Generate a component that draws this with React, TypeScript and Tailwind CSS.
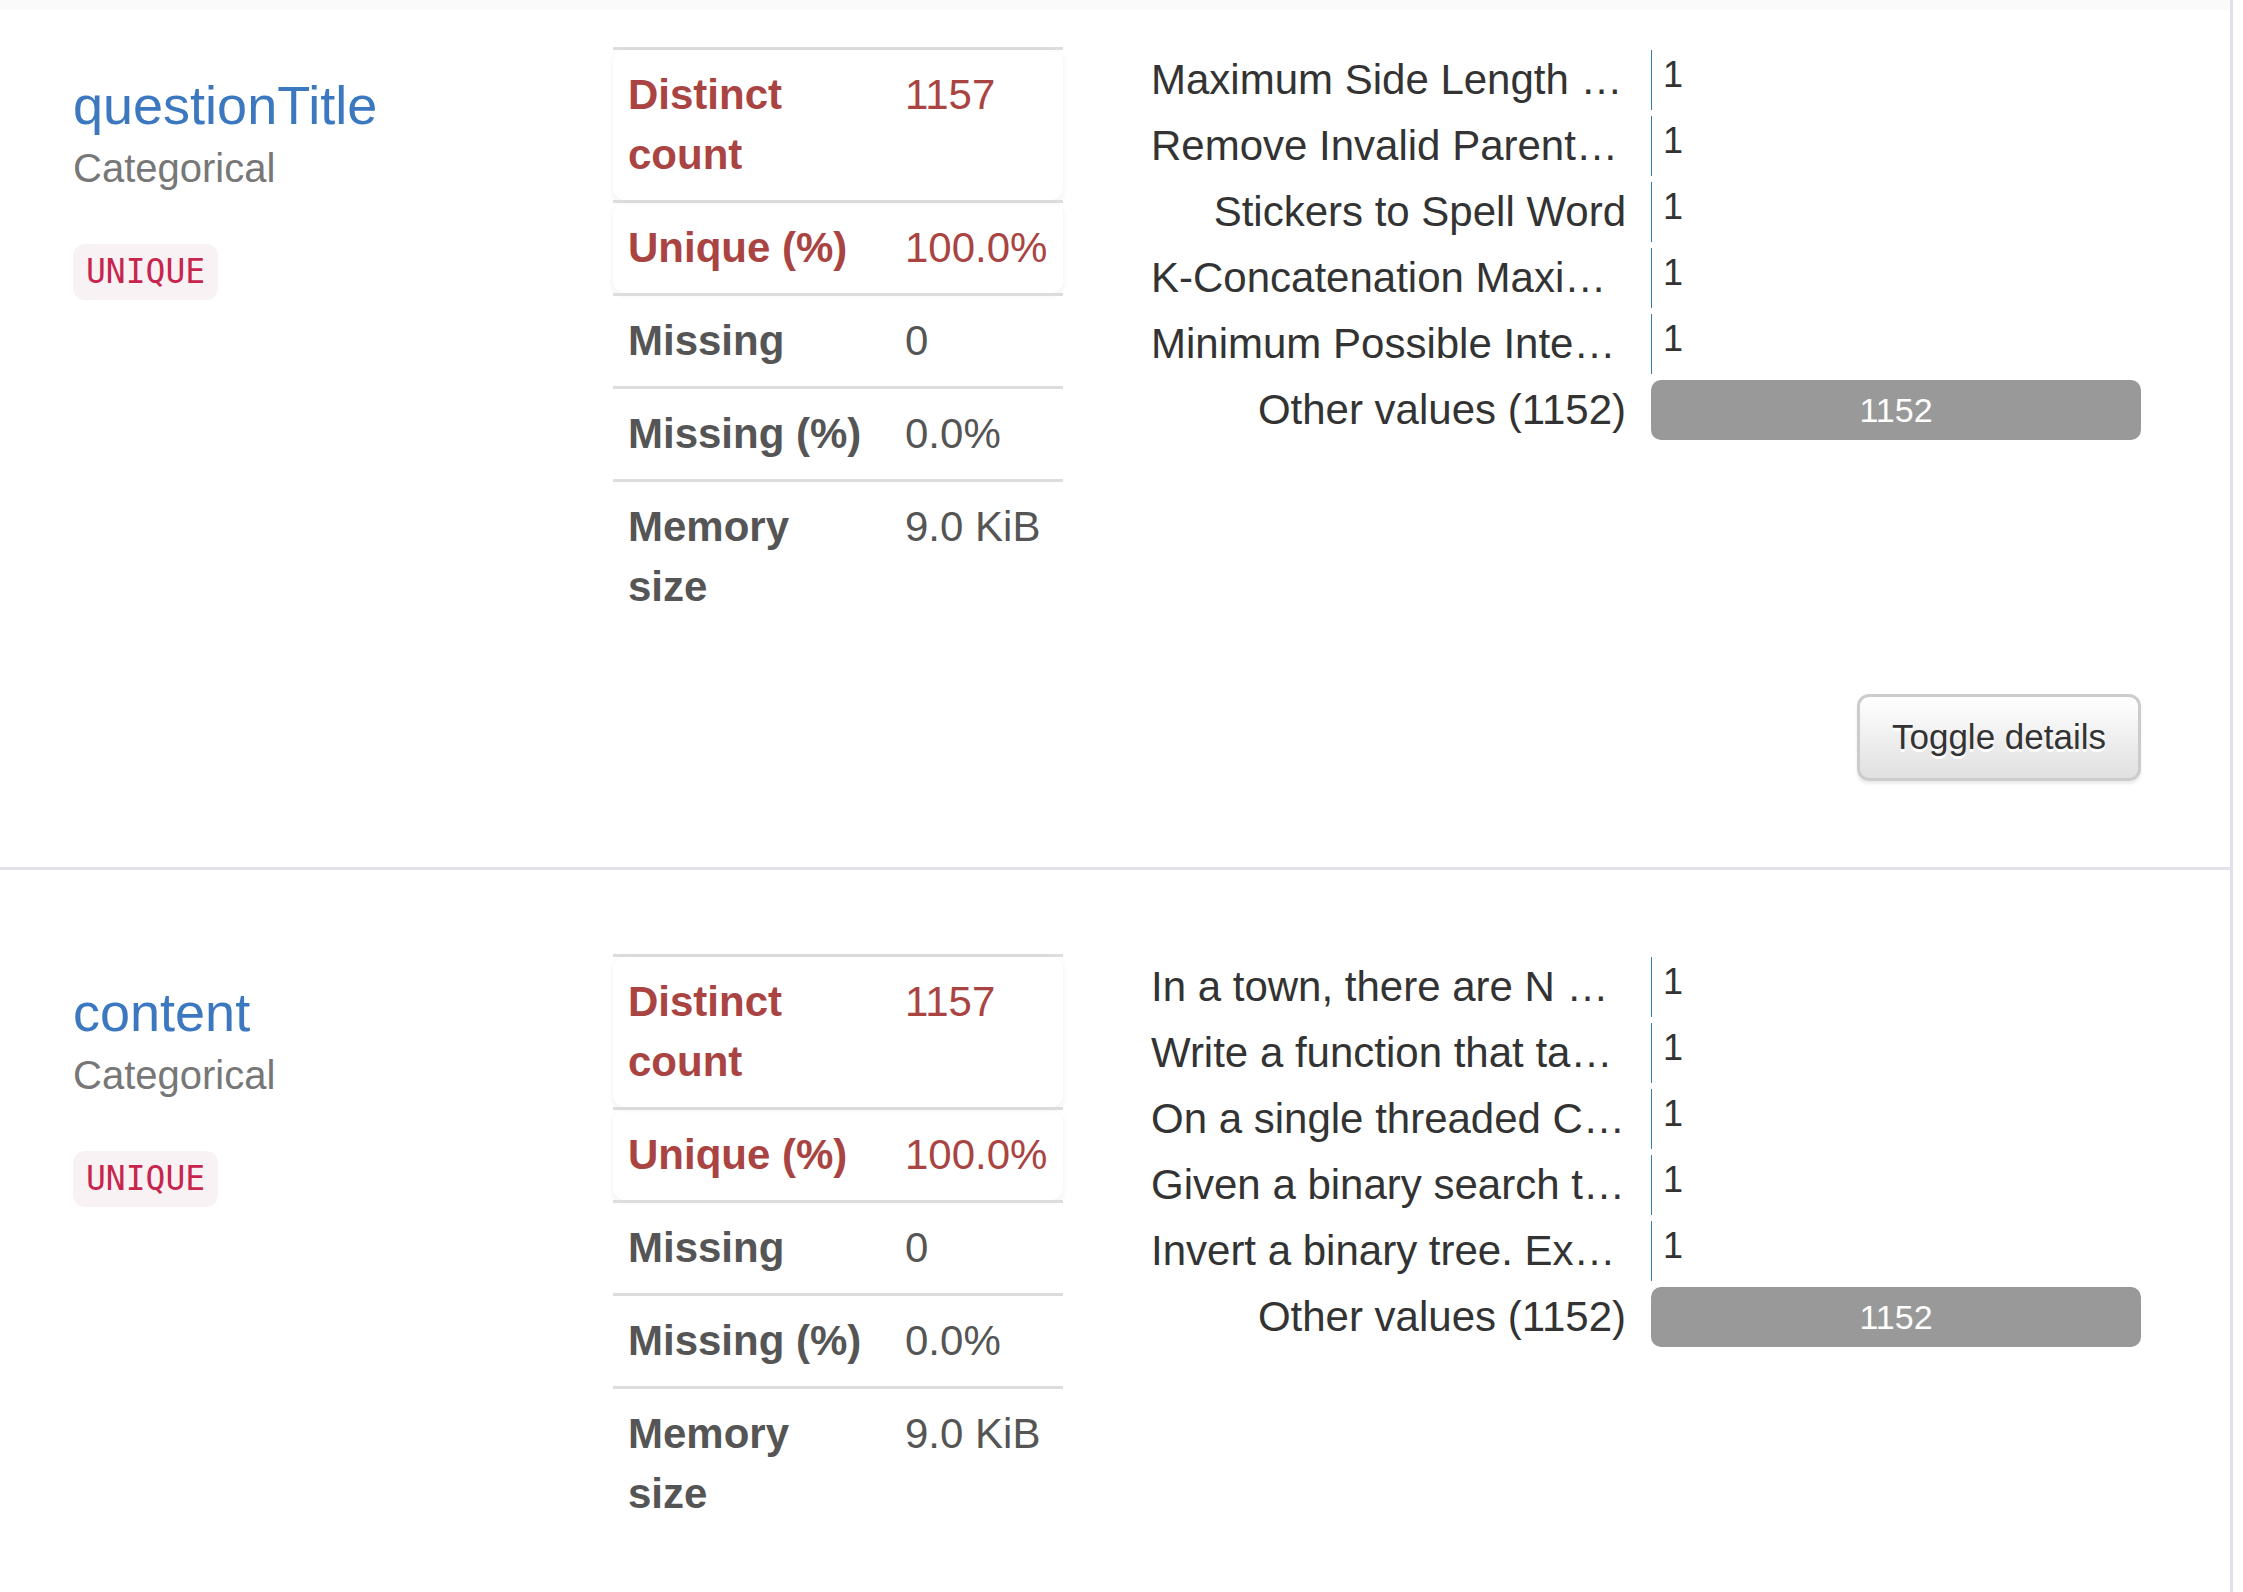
import React from "react";

type Stat = { label: string; value: string; alert?: boolean };
type Variable = { name: string; kind: string; values: string[]; other: number; showToggle: boolean };

const stats: Stat[] = [
  { label: "Distinct count", value: "1157", alert: true },
  { label: "Unique (%)", value: "100.0%", alert: true },
  { label: "Missing", value: "0" },
  { label: "Missing (%)", value: "0.0%" },
  { label: "Memory size", value: "9.0 KiB" },
];

const variables: Variable[] = [
  {
    name: "questionTitle",
    kind: "Categorical",
    values: [
      "Maximum Side Length of a Square with Sum Less than or Equal to Threshold",
      "Remove Invalid Parentheses",
      "Stickers to Spell Word",
      "K-Concatenation Maximum Sum",
      "Minimum Possible Integer After at Most K Adjacent Swaps On Digits",
    ],
    other: 1152,
    showToggle: true,
  },
  {
    name: "content",
    kind: "Categorical",
    values: [
      "In a town, there are N people labelled from 1 to N.",
      "Write a function that takes an unsigned integer and returns the number of bits.",
      "On a single threaded CPU, we execute a program containing n functions.",
      "Given a binary search tree (BST), find the lowest common ancestor.",
      "Invert a binary tree. Example: Input",
    ],
    other: 1152,
    showToggle: true,
  },
];

const BAR_WIDTH = 490;

function StatsTable() {
  return (
    <div className="flex flex-col w-[450px]">
      {stats.map((s) => (
        <div key={s.label} className="border-t-[3px] border-[#dddddd]">
          <div
            className={`flex py-[15px] leading-[60px] text-[42px] ${
              s.alert ? "rounded-[12px] shadow-[0_2px_6px_rgba(0,0,0,0.07)] text-[#a94442]" : "text-[#555555]"
            }`}
          >
            <div className="w-[277px] px-[15px] font-bold">{s.label}</div>
            <div className="w-[173px] px-[15px] whitespace-nowrap">{s.value}</div>
          </div>
        </div>
      ))}
    </div>
  );
}

function FreqTable({ values, other }: { values: string[]; other: number }) {
  const total = other + values.length;
  return (
    <div className="flex flex-col text-[42px] text-[#333333]">
      {values.map((v, i) => (
        <div key={i} className="flex items-center h-[66px]">
          <div className="w-[475px] mr-[25px] text-right whitespace-nowrap overflow-hidden text-ellipsis leading-[66px]">
            {v}
          </div>
          <div className="flex items-center w-[490px] h-[60px]">
            <div
              className="h-[60px] bg-[#337ab7]"
              style={{ width: Math.max(1, Math.round((BAR_WIDTH * 1) / total)) }}
            />
            <span className="ml-[11px] mb-[11px] text-[36px] leading-[48px]">1</span>
          </div>
        </div>
      ))}
      <div className="flex items-center h-[66px]">
        <div className="w-[475px] mr-[25px] text-right whitespace-nowrap leading-[66px]">
          Other values ({other})
        </div>
        <div className="flex items-center justify-center w-[490px] h-[60px] rounded-[10px] bg-[#999999] text-white text-[34px]">
          {other}
        </div>
      </div>
    </div>
  );
}

function VariableSection({ v, first }: { v: Variable; first: boolean }) {
  return (
    <section
      className={`flex flex-col pl-[73px] pr-[89px] border-b-[3px] border-[#e2e2ec] ${
        first ? "pt-[37px]" : "pt-[84px]"
      } pb-[86px]`}
    >
      <div className="grid grid-cols-[540px_450px_1fr]">
        <div className="flex flex-col items-start">
          <div className="mt-[28px] text-[54px] leading-[60px] text-[#3b78c0]">{v.name}</div>
          <div className="mt-[2px] text-[40px] leading-[62px] text-[#777777]">{v.kind}</div>
          <code className="mt-[45px] h-[56px] flex items-center px-[13px] rounded-[12px] bg-[#f9f2f4] text-[#c7254e] text-[33px] font-['DejaVu_Sans_Mono',monospace]">
            UNIQUE
          </code>
        </div>
        <StatsTable />
        <div className="pl-[88px]">
          <FreqTable values={v.values} other={v.other} />
        </div>
      </div>
      {v.showToggle && (
        <div className="flex justify-end mt-[62px]">
          <button className="w-[284px] h-[87px] rounded-[12px] border-[3px] border-[#cccccc] bg-linear-to-b from-white to-[#e0e0e0] text-[35px] text-[#333333] shadow-[0_3px_3px_rgba(0,0,0,0.08)] [text-shadow:0_3px_0_#ffffff]">
            Toggle details
          </button>
        </div>
      )}
    </section>
  );
}

export default function App() {
  return (
    <div className="w-[2243px] h-[1592px] overflow-hidden bg-white font-['Liberation_Sans',Arial,sans-serif]">
      <div className="w-[2233px] h-full border-r-[3px] border-[#e0e0eb]">
        <div className="h-[10px] bg-[#fafafa]" />
        {variables.map((v, i) => (
          <VariableSection key={v.name} v={v} first={i === 0} />
        ))}
      </div>
    </div>
  );
}
